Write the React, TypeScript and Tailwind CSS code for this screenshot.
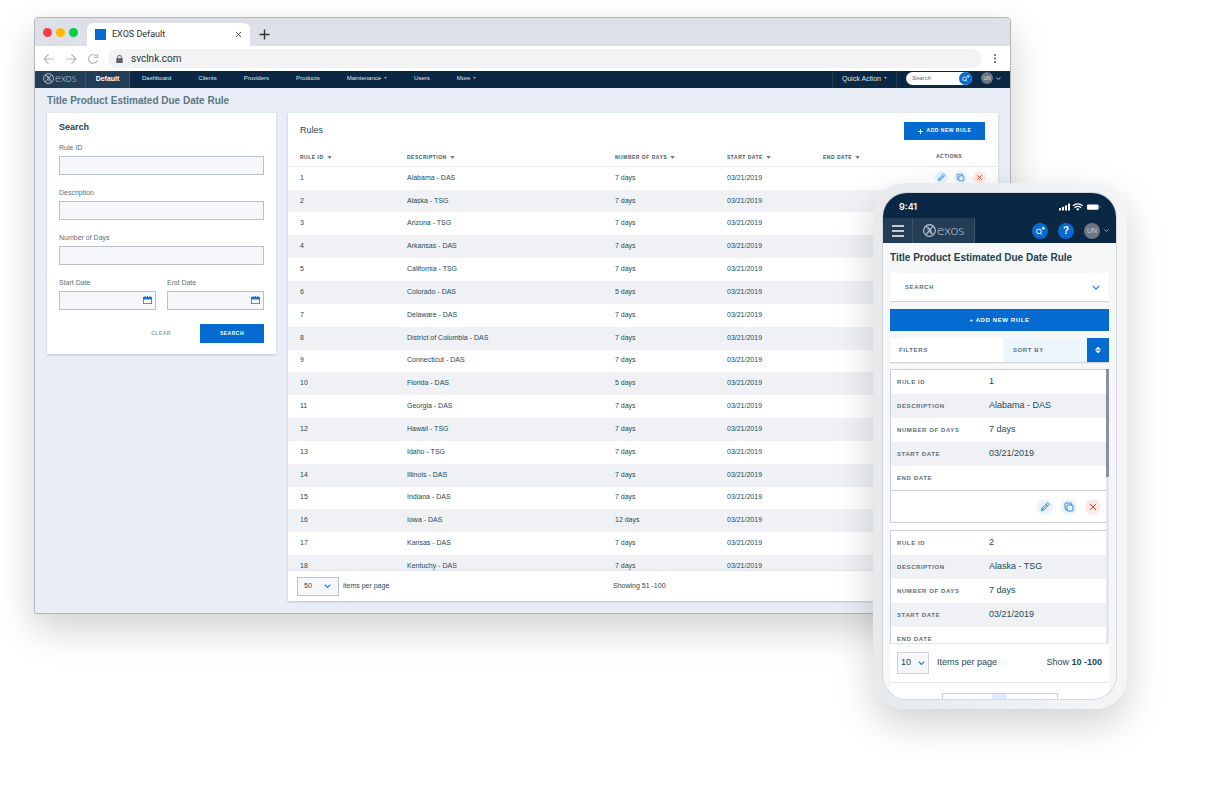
import { ReactNode } from 'react'
import clsx from 'clsx'

interface Rule {
  id: number
  description: string
  days: string
  start: string
}

const START = '03/21/2019'

const rules: Rule[] = [
  { id: 1, description: 'Alabama - DAS', days: '7 days', start: START },
  { id: 2, description: 'Alaska - TSG', days: '7 days', start: START },
  { id: 3, description: 'Arizona - TSG', days: '7 days', start: START },
  { id: 4, description: 'Arkansas - DAS', days: '7 days', start: START },
  { id: 5, description: 'California - TSG', days: '7 days', start: START },
  { id: 6, description: 'Colorado - DAS', days: '5 days', start: START },
  { id: 7, description: 'Delaware - DAS', days: '7 days', start: START },
  { id: 8, description: 'District of Columbia - DAS', days: '7 days', start: START },
  { id: 9, description: 'Connecticut - DAS', days: '7 days', start: START },
  { id: 10, description: 'Florida - DAS', days: '5 days', start: START },
  { id: 11, description: 'Georgia - DAS', days: '7 days', start: START },
  { id: 12, description: 'Hawaii - TSG', days: '7 days', start: START },
  { id: 13, description: 'Idaho - TSG', days: '7 days', start: START },
  { id: 14, description: 'Illinois - DAS', days: '7 days', start: START },
  { id: 15, description: 'Indiana - DAS', days: '7 days', start: START },
  { id: 16, description: 'Iowa - DAS', days: '12 days', start: START },
  { id: 17, description: 'Kansas - DAS', days: '7 days', start: START },
  { id: 18, description: 'Kentuchy - DAS', days: '7 days', start: START },
]

const columns = [
  { label: 'Rule ID', width: 'w-[107px]' },
  { label: 'Description', width: '' },
  { label: 'Number of Days', width: 'w-[112px]' },
  { label: 'Start Date', width: 'w-24' },
  { label: 'End Date', width: 'w-[113px]' },
]

/* ---------- icons ---------- */

function Chevron({ className }: { className?: string }) {
  return (
    <svg viewBox="0 0 10 6" fill="none" stroke="currentColor" strokeWidth="1.6" className={className} aria-hidden="true">
      <path d="M1 1l4 4 4-4" />
    </svg>
  )
}

function Caret({ className }: { className?: string }) {
  return (
    <svg viewBox="0 0 6 4" fill="currentColor" className={className} aria-hidden="true">
      <path d="M0 0h6L3 4z" />
    </svg>
  )
}

function LogoMark({ className }: { className?: string }) {
  return (
    <svg viewBox="0 0 24 24" fill="none" stroke="currentColor" strokeWidth="2" className={className} aria-hidden="true">
      <circle cx="12" cy="12" r="10.8" />
      <path d="M18.5 4.500L5.500 19.500" />
      <path d="M5 5.500h2.200c1 0 1.500.4 2 1.100l6.300 10.200c.5.800 1 1.200 2 1.200H19" />
      <path d="M7 8.500l6.500 10.500M10.500 5l6.500 10.500" strokeWidth="1" />
    </svg>
  )
}

function SearchPlus({ className }: { className?: string }) {
  return (
    <svg viewBox="0 0 16 16" fill="none" stroke="currentColor" strokeWidth="1" className={className} aria-hidden="true">
      <circle cx="6.900" cy="8.400" r="2.300" />
      <path d="M8.500 10.100l1.300 1.500M11.300 3.600v3.400M9.600 5.300h3.400" />
    </svg>
  )
}

function Calendar({ className }: { className?: string }) {
  return (
    <svg viewBox="0 0 18 16" className={className} aria-hidden="true">
      <path d="M0 2h3V0h2v2h3V0h2v2h3V0h2v2h3v14H0z" fill="#1674d8" />
      <path d="M1.500 7h15v7.500h-15z" fill="#fff" />
    </svg>
  )
}

function Pencil() {
  return (
    <svg viewBox="0 0 16 16" fill="none" stroke="currentColor" strokeWidth=".8" className="size-full" aria-hidden="true">
      <path d="M4.200 11.800l.5-2.400 5.300-5.300c.4-.4.900-.4 1.200 0l.7.7c.4.4.4.900 0 1.200l-5.300 5.300zM9 5.100l1.900 1.900M4.700 9.400l1.900 1.900M5.700 10.300l4.200-4.200" />
    </svg>
  )
}

function Copy() {
  return (
    <svg viewBox="0 0 16 16" fill="none" stroke="currentColor" strokeWidth=".9" className="size-full" aria-hidden="true">
      <rect x="6" y="6" width="6" height="6" rx=".8" />
      <path d="M10.500 6V4.800a.8.8 0 0 0-.8-.8H4.800a.8.8 0 0 0-.8.8v4.900c0 .4.400.8.8.8H6" />
    </svg>
  )
}

function Cross() {
  return (
    <svg viewBox="0 0 16 16" fill="none" stroke="currentColor" strokeWidth="1" className="size-full" aria-hidden="true">
      <path d="M5 5l6 6M11 5l-6 6" />
    </svg>
  )
}

/* ---------- shared bits ---------- */

function RowActions({ size, gap }: { size: string; gap: string }) {
  return (
    <div className={clsx('flex items-center', gap)}>
      <button aria-label="Edit" className={clsx('rounded-full bg-[#eaf4fd] text-[#1d7cdc]', size)}><Pencil /></button>
      <button aria-label="Copy" className={clsx('rounded-full bg-[#eaf4fd] text-[#1d7cdc]', size)}><Copy /></button>
      <button aria-label="Delete" className={clsx('rounded-full bg-[#feebe9] text-[#ea4335]', size)}><Cross /></button>
    </div>
  )
}

function Field({ id, label, date }: { id: string; label: string; date?: boolean }) {
  return (
    <div className="relative min-w-0 flex-1">
      <label htmlFor={id} className="block text-[7px] leading-[10px] text-[#5b7079] mb-[3px]">{label}</label>
      <input id={id} type="text" className="block w-full h-[19px] border border-[#b8c0c9] bg-[#f6f7fa] px-1 text-[7px]" />
      {date && <Calendar className="absolute right-1 bottom-1.5 w-[9px] h-2" />}
    </div>
  )
}

function PageSize({ id, value, className, chevron }: { id: string; value: string; className: string; chevron: string }) {
  return (
    <div className="relative">
      <select id={id} defaultValue={value} className={clsx('block appearance-none bg-[#f6f7fa] border', className)}>
        <option>{value}</option>
      </select>
      <Chevron className={clsx('absolute top-1/2 -translate-y-1/2 w-[7px] h-[5px] text-[#1d7cdc] pointer-events-none', chevron)} />
    </div>
  )
}

/* ---------- desktop ---------- */

function BrowserChrome() {
  return (
    <>
      <div className="flex h-7 items-end bg-[#dde0e8]">
        <div className="flex gap-1 self-center pl-2 w-[52px]">
          <span className="size-[9px] rounded-full bg-[#ff3b47]" />
          <span className="size-[9px] rounded-full bg-[#ffb800]" />
          <span className="size-[9px] rounded-full bg-[#00d140]" />
        </div>
        <div className="flex h-[23px] w-[163px] items-center rounded-t-md bg-white pl-2 pr-2">
          <span className="size-[11px] bg-[#066bd0]" />
          <span className="ml-1.5 flex-1 font-[Roboto] text-[9px] text-[#333]">EXOS Default</span>
          <button aria-label="Close tab" className="size-[7px] text-[#444]">
            <svg viewBox="0 0 8 8" fill="none" stroke="currentColor" strokeWidth="1" className="size-full"><path d="M1 1l6 6M7 1L1 7" /></svg>
          </button>
        </div>
        <button aria-label="New tab" className="ml-[9px] mb-1.5 size-[11px] text-[#333]">
          <svg viewBox="0 0 11 11" fill="none" stroke="currentColor" strokeWidth="1.400" className="size-full"><path d="M5.500 .5v10M.5 5.500h10" /></svg>
        </button>
      </div>
      <div className="flex h-[25px] items-center bg-white pl-2 pr-[13px] text-[#b4b6b8]">
        <button aria-label="Back" className="size-3">
          <svg viewBox="0 0 12 12" fill="none" stroke="currentColor" strokeWidth="1.200" className="size-full"><path d="M11 6H1.500M5.500 1.500L1 6l4.500 4.500" /></svg>
        </button>
        <button aria-label="Forward" className="ml-2.5 size-3">
          <svg viewBox="0 0 12 12" fill="none" stroke="currentColor" strokeWidth="1.200" className="size-full"><path d="M1 6h9.500M6.500 1.500L11 6l-4.500 4.500" /></svg>
        </button>
        <button aria-label="Reload" className="ml-2.5 size-3">
          <svg viewBox="0 0 12 12" fill="none" stroke="currentColor" strokeWidth="1.200" className="size-full"><path d="M10.200 7.200A4.400 4.400 0 1 1 9.300 3M10.500 1v3.500H7" /></svg>
        </button>
        <div className="ml-[9px] flex h-[19px] flex-1 items-center rounded-full bg-[#f1f3f5] pl-2">
          <svg viewBox="0 0 8 10" fill="#5f6368" className="h-2 w-[7px]"><path d="M1 4V3a3 3 0 0 1 6 0v1h1v6H0V4zm1.200 0h3.600V3a1.800 1.800 0 0 0-3.600 0z" /></svg>
          <span className="ml-2 font-[Roboto] text-[10px] leading-none text-[#333]">svclnk.com</span>
        </div>
        <button aria-label="Menu" className="ml-[11px] w-1 h-[9px]">
          <svg viewBox="0 0 4 10" fill="#55585c" className="size-full"><circle cx="2" cy="1.200" r="1.100" /><circle cx="2" cy="5" r="1.100" /><circle cx="2" cy="8.800" r="1.100" /></svg>
        </button>
      </div>
    </>
  )
}

function NavLink({ children, caret }: { children: ReactNode; caret?: boolean }) {
  return (
    <a href="#" className="flex items-center gap-[3px] whitespace-nowrap">
      {children}
      {caret && <Caret className="w-[3px] h-0.5 opacity-70" />}
    </a>
  )
}

function DesktopNav() {
  return (
    <nav className="flex h-[17px] items-stretch bg-[#0a2744] text-[6px] leading-[15px] text-[#dfe5eb]">
      <a href="#" aria-label="exos" className="flex w-[51px] items-center gap-px border-r border-[#3b5268] bg-[#233d56] pl-2 pb-[3px] text-[#c3ccd5]">
        <LogoMark className="size-[11px] shrink-0" />
        <span className="font-[Lato] font-light text-[11px] leading-[14px]">exos</span>
      </a>
      <a href="#" className="flex w-11 items-center justify-center border-r border-[#3b5268] bg-[#233d56] pb-[3px] text-[7px] font-bold text-white">Default</a>
      <div className="flex flex-1 items-center gap-[27px] pl-3 pb-[3px]">
        <NavLink>Dashboard</NavLink>
        <NavLink>Clients</NavLink>
        <NavLink>Providers</NavLink>
        <NavLink>Products</NavLink>
        <NavLink caret>Maintenance</NavLink>
        <NavLink>Users</NavLink>
        <NavLink caret>More</NavLink>
      </div>
      <div className="flex w-[65px] items-center justify-center border-x border-[#233d56] pb-[3px] text-[7px]">
        <NavLink caret>Quick Action</NavLink>
      </div>
      <div className="flex items-center pb-[3px] pl-[9px] pr-[9px]">
        <div className="flex h-[13px] w-[66px] items-center rounded-full bg-white">
          <input aria-label="Search" placeholder="Search" className="w-0 flex-1 bg-transparent pl-1.5 text-[6px] italic placeholder:text-[#5b7079]" />
          <button aria-label="Search" className="size-[13px] rounded-full bg-[#066bd0] text-white"><SearchPlus className="size-full" /></button>
        </div>
        <button className="ml-[9px] flex items-center gap-[3px]">
          <span className="flex size-3 items-center justify-center rounded-full bg-[#6b7680] text-[5px]">UN</span>
          <Chevron className="w-[5px] h-[3px]" />
        </button>
      </div>
    </nav>
  )
}

function SearchPanel() {
  return (
    <form className="w-[229px] shrink-0 bg-white px-3 pt-2 pb-[11px] shadow-[0_1px_2px_rgba(40,70,110,0.25)]">
      <h2 className="mb-2.5 text-[9px] leading-3 font-bold text-[#1d4350]">Search</h2>
      <div className="flex flex-col gap-[13px]">
        <Field id="rule-id" label="Rule ID" />
        <Field id="description" label="Description" />
        <Field id="days" label="Number of Days" />
        <div className="flex gap-[11px]">
          <Field id="start" label="Start Date" date />
          <Field id="end" label="End Date" date />
        </div>
      </div>
      <div className="mt-3.5 flex justify-end">
        <button type="reset" className="w-[78px] text-[5px] font-bold tracking-widest text-[#94a0a8]">CLEAR</button>
        <button type="button" className="h-[19px] w-16 bg-[#066bd0] text-[5px] font-bold tracking-widest text-white">SEARCH</button>
      </div>
    </form>
  )
}

function RulesPanel() {
  return (
    <section className="min-w-0 flex-1 bg-white text-[7px] text-[#234a57] shadow-[0_1px_2px_rgba(40,70,110,0.25)]">
      <div className="flex items-start justify-between pl-3 pr-[13px] pt-[9px]">
        <h2 className="text-[9px] leading-4">Rules</h2>
        <button className="flex h-[18px] w-[81px] items-center justify-center gap-1 bg-[#066bd0] text-[5px] font-bold tracking-widest text-white">
          <svg viewBox="0 0 6 6" stroke="currentColor" strokeWidth="1" className="size-[5px]"><path d="M3 0v6M0 3h6" /></svg>
          ADD NEW RULE
        </button>
      </div>
      <div className="h-[430px] overflow-hidden">
        <table className="h-[438px] w-full table-fixed border-collapse text-left leading-none">
          <thead>
            <tr className="h-[26px] border-b border-[#e9ebef] text-[5px] tracking-widest text-[#3d5a66]">
              {columns.map((c) => (
                <th key={c.label} className={clsx('pt-2.5 pl-3 pr-0 uppercase whitespace-nowrap', c.width)}>
                  <span className="inline-flex items-center gap-[3px]">
                    {c.label}
                    <Caret className="w-[5px] h-[3px] text-[#6f7d8b]" />
                  </span>
                </th>
              ))}
              <th className="w-[74px] pt-2 pl-3 uppercase">Actions</th>
            </tr>
          </thead>
          <tbody>
            {rules.map((r) => (
              <tr key={r.id} className="even:bg-[#eff1f5]">
                <td className="pl-3 pb-0.5">{r.id}</td>
                <td className="pl-3 pb-0.5">{r.description}</td>
                <td className="pl-3 pb-0.5">{r.days}</td>
                <td className="pl-3 pb-0.5">{r.start}</td>
                <td className="pl-3 pb-0.5" />
                <td className="pl-[11px] pb-0.5"><RowActions size="size-[13px]" gap="gap-1.5" /></td>
              </tr>
            ))}
          </tbody>
        </table>
      </div>
      <div className="grid h-[31px] grid-cols-[316px_1fr] items-center border-t border-[#dfe3e8] pl-[9px]">
        <div className="flex items-center gap-1">
          <PageSize id="page-size" value="50" className="h-[19px] w-[42px] border-[#b8c0c9] pl-1.5 text-[7px]" chevron="right-2" />
          <label htmlFor="page-size">items per page</label>
        </div>
        <span>Showing 51 -100</span>
      </div>
    </section>
  )
}

function DesktopWindow() {
  return (
    <div className="overflow-hidden rounded-t-[4px] rounded-b-[2px] border border-[#b2b5ba] bg-[#e8edf6] shadow-[0_15px_38px_rgba(0,0,0,0.19)]">
      <BrowserChrome />
      <DesktopNav />
      <main className="px-3 pb-3">
        <h1 className="text-[10px] leading-[25px] font-bold text-[#5b7780]">Title Product Estimated Due Date Rule</h1>
        <div className="flex items-start gap-3">
          <SearchPanel />
          <RulesPanel />
        </div>
      </main>
    </div>
  )
}

/* ---------- phone ---------- */

function StatusBar() {
  return (
    <div className="flex h-[25px] items-center justify-between pl-4 pr-[15px] pt-[3px] text-white">
      <span className="font-[Inter] text-[9px] font-semibold">9:41</span>
      <svg viewBox="0 0 42 8" fill="currentColor" className="w-[42px] h-2" aria-hidden="true">
        <rect x="0" y="5" width="2" height="2.500" rx=".5" />
        <rect x="3" y="3.700" width="2" height="3.800" rx=".5" />
        <rect x="6" y="2.200" width="2" height="5.300" rx=".5" />
        <rect x="9" y=".5" width="2" height="7" rx=".5" />
        <path d="M14 2.800a7 7 0 0 1 9.600 0M15.600 4.700a4.700 4.700 0 0 1 6.400 0" fill="none" stroke="currentColor" strokeWidth="1.300" />
        <path d="M17.200 6.100a2.300 2.300 0 0 1 3.200 0l-1.600 1.600z" />
        <rect x="28" y="1.500" width="11.500" height="5.200" rx="1" />
        <rect x="40.500" y="3" width=".8" height="2" rx=".4" opacity=".5" />
      </svg>
    </div>
  )
}

function PhoneNav() {
  return (
    <nav className="flex h-[25px] items-stretch text-[#c3ccd5]">
      <button aria-label="Open menu" className="flex w-[30px] items-center justify-center border-r border-[#3b5268] bg-[#233d56]">
        <svg viewBox="0 0 12 12" stroke="currentColor" strokeWidth="2" className="size-3"><path d="M0 1h12M0 6h12M0 11h12" /></svg>
      </button>
      <a href="#" aria-label="exos" className="flex w-[62px] items-center gap-px border-r border-[#3b5268] bg-[#233d56] pl-2.5">
        <LogoMark className="size-[13px] shrink-0" />
        <span className="font-[Lato] font-light text-[14px] leading-none pb-0.5">exos</span>
      </a>
      <div className="flex flex-1 items-center justify-end gap-2.5 pr-[7px]">
        <button aria-label="Search" className="size-4 rounded-full bg-[#066bd0] text-white"><SearchPlus className="size-full" /></button>
        <button aria-label="Help" className="size-4 rounded-full bg-[#066bd0] text-[10px] leading-4 font-bold text-white">?</button>
        <button className="flex items-center gap-1">
          <span className="flex size-4 items-center justify-center rounded-full bg-[#6b7680] text-[7px] leading-none">UN</span>
          <Chevron className="w-[5px] h-[3px]" />
        </button>
      </div>
    </nav>
  )
}

function RuleCard({ rule }: { rule: Rule }) {
  const rows = [
    ['Rule ID', String(rule.id)],
    ['Description', rule.description],
    ['Number of Days', rule.days],
    ['Start Date', rule.start],
    ['End Date', ''],
  ]
  return (
    <article className="border border-r-0 border-[#ccd1d7]">
      <dl className="border-b border-[#ccd1d7]">
        {rows.map(([label, value]) => (
          <div key={label} className="flex h-6 items-center pl-1.5 even:bg-[#eff1f5]">
            <dt className="w-[92px] text-[6px] font-bold tracking-widest uppercase text-[#5b7079]">{label}</dt>
            <dd className="text-[9px] text-[#234a57]">{value}</dd>
          </div>
        ))}
      </dl>
      <div className="flex h-[31px] items-center justify-end pr-[5px]">
        <RowActions size="size-4" gap="gap-2" />
      </div>
    </article>
  )
}

function Phone() {
  return (
    <div className="w-[254px] rounded-[32px] bg-linear-to-r from-[#e6eaed] to-[#f3f5f7] p-2.5 pr-[11px] shadow-[0_15px_38px_rgba(0,0,0,0.18)]">
      <div className="overflow-hidden rounded-[24px] bg-[#f6f7f8] shadow-[0_0_0_1px_#d5d9dd]">
        <header className="bg-[#0a2744]">
          <StatusBar />
          <PhoneNav />
        </header>
        <main className="px-[7px]">
          <h1 className="text-[10px] leading-[30px] font-bold text-[#1d4350] whitespace-nowrap">Title Product Estimated Due Date Rule</h1>
          <button className="flex h-7 w-full items-center justify-between bg-white pl-[15px] pr-[9px] text-[6px] font-bold tracking-widest text-[#5b7079] shadow-[0_1px_1px_rgba(0,0,0,0.15)]">
            SEARCH
            <Chevron className="w-2 h-[5px] text-[#1d7cdc]" />
          </button>
          <button className="mt-2 block h-[22px] w-full bg-[#066bd0] text-[6px] font-bold tracking-widest text-white">+ ADD NEW RULE</button>
          <div className="mt-[7px] flex h-6 text-[6px] font-bold tracking-widest text-[#5b7079] shadow-[0_1px_1px_rgba(0,0,0,0.15)]">
            <button className="flex-1 bg-white pl-[9px] text-left">FILTERS</button>
            <button className="w-[84px] bg-[#edf5fd] pl-2.5 text-left">SORT BY</button>
            <button aria-label="Change sort order" className="flex w-[22px] items-center justify-center bg-[#066bd0] text-white">
              <svg viewBox="0 0 6 8" fill="currentColor" className="w-1.5 h-2"><path d="M0 3.400L3 .8l3 2.600zM0 4.600h6L3 7.200z" /></svg>
            </button>
          </div>
          <div className="mt-[7px] flex h-[274px] overflow-hidden bg-white">
            <div className="flex flex-1 flex-col gap-[7px]">
              {rules.slice(0, 2).map((r) => <RuleCard key={r.id} rule={r} />)}
            </div>
            <div className="w-[3px] bg-[#e4e8ed]"><div className="h-[108px] bg-[#8592a5]" /></div>
          </div>
          <div className="flex h-10 items-center border-y border-[#e4e7eb] bg-white px-[7px] text-[9px] text-[#234a57]">
            <PageSize id="phone-page-size" value="10" className="h-[22px] w-8 border-[#ccd1d7] pl-[3px] text-[9px]" chevron="right-1" />
            <label htmlFor="phone-page-size" className="ml-2 flex-1">Items per page</label>
            <span>Show <b>10 -100</b></span>
          </div>
          <div className="flex h-4 items-end justify-center bg-white">
            <div className="flex h-1.5 w-[116px] justify-center border border-b-0 border-[#ccd1d7]">
              <span className="w-[15px] bg-[#dcecfa]" />
            </div>
          </div>
        </main>
      </div>
    </div>
  )
}

export default function App() {
  return (
    <div className="relative min-h-screen overflow-hidden bg-white pt-[17px] pl-[34px] pr-[197px] font-['Liberation_Sans',Arial,sans-serif]">
      <DesktopWindow />
      <div className="absolute right-[81px] top-[183px]">
        <Phone />
      </div>
    </div>
  )
}
